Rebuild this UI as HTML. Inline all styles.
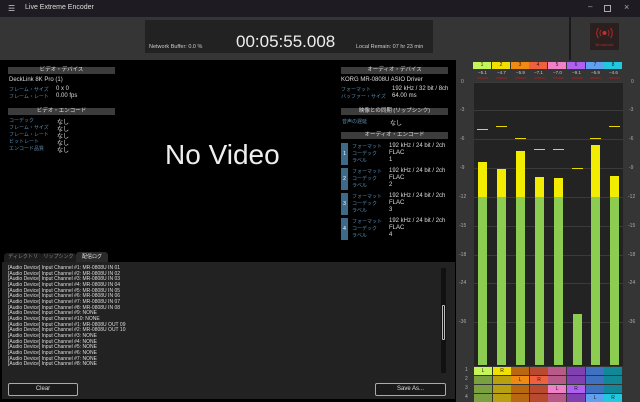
<!DOCTYPE html>
<html><head><meta charset="utf-8"><style>
*{margin:0;padding:0;box-sizing:border-box}
body{width:640px;height:402px;overflow:hidden;background:#000;font-family:"Liberation Sans","Noto Sans CJK JP",sans-serif;color:#ddd;position:relative;font-size:6px}
.a{position:absolute;white-space:nowrap}
.hb{position:absolute;height:7px;background:#3c3c3c;color:#ddd;font-size:5.5px;line-height:7px;text-align:center}
.l{color:#5b8db0;font-size:5px}
.mb{position:absolute;width:18px;height:7px;font-size:5px;line-height:7px;text-align:center;color:#222}
.g{position:absolute;width:18px;height:8px;font-size:5px;line-height:8px;text-align:center;color:#222}
.sc{position:absolute;font-size:5px;color:#aaa}
</style></head><body>
<div class="a" style="left:0;top:0;width:640px;height:17px;background:#1f1b22"></div>
<div class="a" style="left:8px;top:4px;font-size:8px;color:#ccc">&#9776;</div>
<div class="a" style="left:25px;top:4px;font-size:7px;color:#ddd">Live Extreme Encoder</div>
<div class="a" style="left:588px;top:2px;font-size:8px;color:#aaa">&#8211;</div>
<div class="a" style="left:604px;top:5px;width:7px;height:7px;border:1px solid #aaa"></div>
<div class="a" style="left:624px;top:2px;font-size:9px;color:#aaa">&#215;</div>
<div class="a" style="left:0;top:17px;width:640px;height:43px;background:#353535"></div>
<div class="a" style="left:569px;top:17px;width:2px;height:43px;background:#1a1a1a"></div>
<div class="a" style="left:145px;top:20px;width:288px;height:33px;background:#222"></div>
<div class="a" style="left:149px;top:44px;font-size:5.5px;color:#ccc">Network Buffer: 0.0 %</div>
<div class="a" style="left:236px;top:32px;font-size:17px;color:#eee">00:05:55.008</div>
<div class="a" style="left:356px;top:44px;font-size:5.5px;color:#ccc">Local Remain: 07 hr 23 min</div>
<div class="a" style="left:590px;top:23px;width:29px;height:27px;background:#2a2020"></div>
<svg class="a" style="left:590px;top:23px" width="29" height="27" viewBox="0 0 29 27"><circle cx="14.5" cy="10" r="2" fill="#c03030"/><path d="M11 7a5 5 0 0 0 0 6M18 7a5 5 0 0 1 0 6M8.5 5a8 8 0 0 0 0 10M20.5 5a8 8 0 0 1 0 10" stroke="#b02828" fill="none" stroke-width="1"/><text x="14.5" y="23" font-size="4" fill="#b02828" text-anchor="middle" font-family="Liberation Sans">Broadcast</text></svg>
<div class="hb" style="left:8px;top:67px;width:107px">ビデオ・デバイス</div>
<div class="a" style="left:9px;top:77px">DeckLink 8K Pro (1)</div>
<div class="a l" style="left:9px;top:86px">フレーム・サイズ</div><div class="a" style="left:56px;top:86px">0 x 0</div>
<div class="a l" style="left:9px;top:93px">フレーム・レート</div><div class="a" style="left:56px;top:93px">0.00 fps</div>
<div class="hb" style="left:8px;top:108px;width:107px">ビデオ・エンコード</div>
<div class="a l" style="left:9px;top:117px">コーデック</div><div class="a" style="left:57px;top:117px">なし</div>
<div class="a l" style="left:9px;top:124px">フレーム・サイズ</div><div class="a" style="left:57px;top:124px">なし</div>
<div class="a l" style="left:9px;top:131px">フレーム・レート</div><div class="a" style="left:57px;top:131px">なし</div>
<div class="a l" style="left:9px;top:138px">ビットレート</div><div class="a" style="left:57px;top:138px">なし</div>
<div class="a l" style="left:9px;top:145px">エンコード品質</div><div class="a" style="left:57px;top:145px">なし</div>
<div class="a" style="left:165px;top:139px;font-size:28px;color:#eee">No Video</div>
<div class="hb" style="left:341px;top:67px;width:107px">オーディオ・デバイス</div>
<div class="a" style="left:341px;top:77px">KORG MR-0808U ASIO Driver</div>
<div class="a l" style="left:341px;top:86px">フォーマット</div><div class="a" style="left:392px;top:86px">192 kHz / 32 bit / 8ch</div>
<div class="a l" style="left:341px;top:93px">バッファー・サイズ</div><div class="a" style="left:392px;top:93px">64.00 ms</div>
<div class="hb" style="left:341px;top:108px;width:107px">映像との同期 (リップシンク)</div>
<div class="a l" style="left:342px;top:118px">音声の遅延</div><div class="a" style="left:390px;top:118px">なし</div>
<div class="hb" style="left:341px;top:132px;width:107px">オーディオ・エンコード</div>
<div class="a" style="left:341px;top:143px;width:7px;height:22px;background:#3d6a88;color:#fff;font-size:5px;line-height:22px;text-align:center">1</div>
<div class="a l" style="left:352px;top:143px">フォーマット</div><div class="a" style="left:389px;top:143px">192 kHz / 24 bit / 2ch</div>
<div class="a l" style="left:352px;top:150px">コーデック</div><div class="a" style="left:389px;top:150px">FLAC</div>
<div class="a l" style="left:352px;top:157px">ラベル</div><div class="a" style="left:389px;top:157px">1</div>
<div class="a" style="left:341px;top:168px;width:7px;height:22px;background:#3d6a88;color:#fff;font-size:5px;line-height:22px;text-align:center">2</div>
<div class="a l" style="left:352px;top:168px">フォーマット</div><div class="a" style="left:389px;top:168px">192 kHz / 24 bit / 2ch</div>
<div class="a l" style="left:352px;top:175px">コーデック</div><div class="a" style="left:389px;top:175px">FLAC</div>
<div class="a l" style="left:352px;top:182px">ラベル</div><div class="a" style="left:389px;top:182px">2</div>
<div class="a" style="left:341px;top:193px;width:7px;height:22px;background:#3d6a88;color:#fff;font-size:5px;line-height:22px;text-align:center">3</div>
<div class="a l" style="left:352px;top:193px">フォーマット</div><div class="a" style="left:389px;top:193px">192 kHz / 24 bit / 2ch</div>
<div class="a l" style="left:352px;top:200px">コーデック</div><div class="a" style="left:389px;top:200px">FLAC</div>
<div class="a l" style="left:352px;top:207px">ラベル</div><div class="a" style="left:389px;top:207px">3</div>
<div class="a" style="left:341px;top:218px;width:7px;height:22px;background:#3d6a88;color:#fff;font-size:5px;line-height:22px;text-align:center">4</div>
<div class="a l" style="left:352px;top:218px">フォーマット</div><div class="a" style="left:389px;top:218px">192 kHz / 24 bit / 2ch</div>
<div class="a l" style="left:352px;top:225px">コーデック</div><div class="a" style="left:389px;top:225px">FLAC</div>
<div class="a l" style="left:352px;top:232px">ラベル</div><div class="a" style="left:389px;top:232px">4</div>
<div class="a" style="left:4px;top:253px;width:38px;height:9px;background:#1c1c1c;color:#888;font-size:5px;line-height:9px;text-align:center;border-radius:3px 3px 0 0">ディレクトリ</div>
<div class="a" style="left:41px;top:253px;width:35px;height:9px;background:#1c1c1c;color:#888;font-size:5px;line-height:9px;text-align:center;border-radius:3px 3px 0 0">リップシンク</div>
<div class="a" style="left:76px;top:252px;width:32px;height:10px;background:#2a2a2a;color:#eee;font-size:5px;line-height:10px;text-align:center;border-radius:3px 3px 0 0">配信ログ</div>
<div class="a" style="left:2px;top:262px;width:453px;height:137px;background:#222"></div>
<div class="a" style="left:8px;top:266px;font-size:5px;line-height:5.65px;color:#ddd">[Audio Device] Input Channel #1: MR-0808U IN 01<br>[Audio Device] Input Channel #2: MR-0808U IN 02<br>[Audio Device] Input Channel #3: MR-0808U IN 03<br>[Audio Device] Input Channel #4: MR-0808U IN 04<br>[Audio Device] Input Channel #5: MR-0808U IN 05<br>[Audio Device] Input Channel #6: MR-0808U IN 06<br>[Audio Device] Input Channel #7: MR-0808U IN 07<br>[Audio Device] Input Channel #8: MR-0808U IN 08<br>[Audio Device] Input Channel #9: NONE<br>[Audio Device] Input Channel #10: NONE<br>[Audio Device] Input Channel #1: MR-0808U OUT 09<br>[Audio Device] Input Channel #2: MR-0808U OUT 10<br>[Audio Device] Input Channel #3: NONE<br>[Audio Device] Input Channel #4: NONE<br>[Audio Device] Input Channel #5: NONE<br>[Audio Device] Input Channel #6: NONE<br>[Audio Device] Input Channel #7: NONE<br>[Audio Device] Input Channel #8: NONE</div>
<div class="a" style="left:441px;top:268px;width:5px;height:105px;background:#111"></div>
<div class="a" style="left:442px;top:305px;width:3px;height:35px;border:1px solid #bbb;border-radius:1px"></div>
<div class="a" style="left:8px;top:383px;width:70px;height:13px;border:1px solid #aaa;border-radius:2px;background:#1a1a1a;color:#ddd;font-size:6px;line-height:11px;text-align:center">Clear</div>
<div class="a" style="left:375px;top:383px;width:71px;height:13px;border:1px solid #aaa;border-radius:2px;background:#1a1a1a;color:#ddd;font-size:6px;line-height:11px;text-align:center">Save As...</div>
<div class="a" style="left:456px;top:60px;width:184px;height:342px;background:#353535"></div>
<div class="a" style="left:474px;top:82px;width:149px;height:284px;background:#232323"></div>
<div id="m"></div>
<div class="mb" style="left:473px;top:62px;background:#c6f55a">1</div>
<div class="mb" style="left:492px;top:62px;background:#f2e000">2</div>
<div class="mb" style="left:511px;top:62px;background:#f08a10">3</div>
<div class="mb" style="left:529px;top:62px;background:#f0603c">4</div>
<div class="mb" style="left:548px;top:62px;background:#f080c8">5</div>
<div class="mb" style="left:567px;top:62px;background:#b060f0">6</div>
<div class="mb" style="left:586px;top:62px;background:#60a0f0">7</div>
<div class="mb" style="left:604px;top:62px;background:#20c8e0">8</div>
<div class="a" style="left:476px;top:70px;font-size:4.5px;color:#ccc">
<span class="a" style="left:2px">−5.1</span><span class="a" style="left:21px">−4.7</span><span class="a" style="left:40px">−5.9</span><span class="a" style="left:58px">−7.1</span><span class="a" style="left:77px">−7.0</span><span class="a" style="left:96px">−9.1</span><span class="a" style="left:115px">−5.9</span><span class="a" style="left:133px">−4.6</span></div>
<div class="sc" style="left:461px;top:79px">0</div><div class="sc" style="left:631px;top:79px">0</div>
<div class="sc" style="left:460px;top:107px">-3</div><div class="sc" style="left:629px;top:107px">-3</div>
<div class="sc" style="left:460px;top:136px">-6</div><div class="sc" style="left:629px;top:136px">-6</div>
<div class="sc" style="left:460px;top:165px">-9</div><div class="sc" style="left:629px;top:165px">-9</div>
<div class="sc" style="left:459px;top:194px">-12</div><div class="sc" style="left:628px;top:194px">-12</div>
<div class="sc" style="left:459px;top:223px">-15</div><div class="sc" style="left:628px;top:223px">-15</div>
<div class="sc" style="left:459px;top:252px">-18</div><div class="sc" style="left:628px;top:252px">-18</div>
<div class="sc" style="left:459px;top:280px">-24</div><div class="sc" style="left:628px;top:280px">-24</div>
<div class="sc" style="left:459px;top:319px">-36</div><div class="sc" style="left:628px;top:319px">-36</div>
<div class="sc" style="left:465px;top:367px">1</div><div class="sc" style="left:465px;top:376px">2</div><div class="sc" style="left:465px;top:385px">3</div><div class="sc" style="left:465px;top:394px">4</div>
<div id="gr"></div>
<script>
var m=document.getElementById('m'),h='';
var lines=[82,110,139,168,197,226,255,283,322];
lines.forEach(function(y){h+='<div class="a" style="left:474px;top:'+y+'px;width:149px;height:1px;background:#3a3a3a"></div>';});
var tops=[162,169,151,177,178,314,145,176],pk=[129,126,138,149,149,168,138,126];
var dim=['#7aa040','#b8a010','#b86810','#b84a30','#b85a88','#8040b0','#4070c0','#108898'];
var gx=[474,493,511,530,548,567,586,604];
for(var i=0;i<8;i++){var x=Math.round(478+i*18.9);
h+='<div class="a" style="left:'+(x-1)+'px;top:77px;width:11px;height:2px;background:#6a2a2a"></div>';
if(tops[i]<197)h+='<div class="a" style="left:'+x+'px;top:'+tops[i]+'px;width:9px;height:'+(197-tops[i])+'px;background:#f2ec00"></div>';
var gt=Math.max(197,tops[i]);h+='<div class="a" style="left:'+x+'px;top:'+gt+'px;width:9px;height:'+(365-gt)+'px;background:#8ccc50"></div>';
h+='<div class="a" style="left:'+(x-1)+'px;top:'+pk[i]+'px;width:11px;height:1px;background:#e8d800"></div>';
for(var r=0;r<4;r++)h+='<div class="a" style="left:'+gx[i]+'px;top:'+(367+r*9)+'px;width:18px;height:8px;background:'+dim[i]+'"></div>';}
m.innerHTML=h;
</script>
<div class="g" style="left:474px;top:367px;background:#c6f55a">L</div><div class="g" style="left:493px;top:367px;background:#f2e000">R</div>
<div class="g" style="left:511px;top:376px;background:#f08a10">L</div><div class="g" style="left:530px;top:376px;background:#f0603c">R</div>
<div class="g" style="left:548px;top:385px;background:#f080c8">L</div><div class="g" style="left:567px;top:385px;background:#b060f0">R</div>
<div class="g" style="left:586px;top:394px;background:#60a0f0">L</div><div class="g" style="left:604px;top:394px;background:#20c8e0">R</div>
</body></html>
